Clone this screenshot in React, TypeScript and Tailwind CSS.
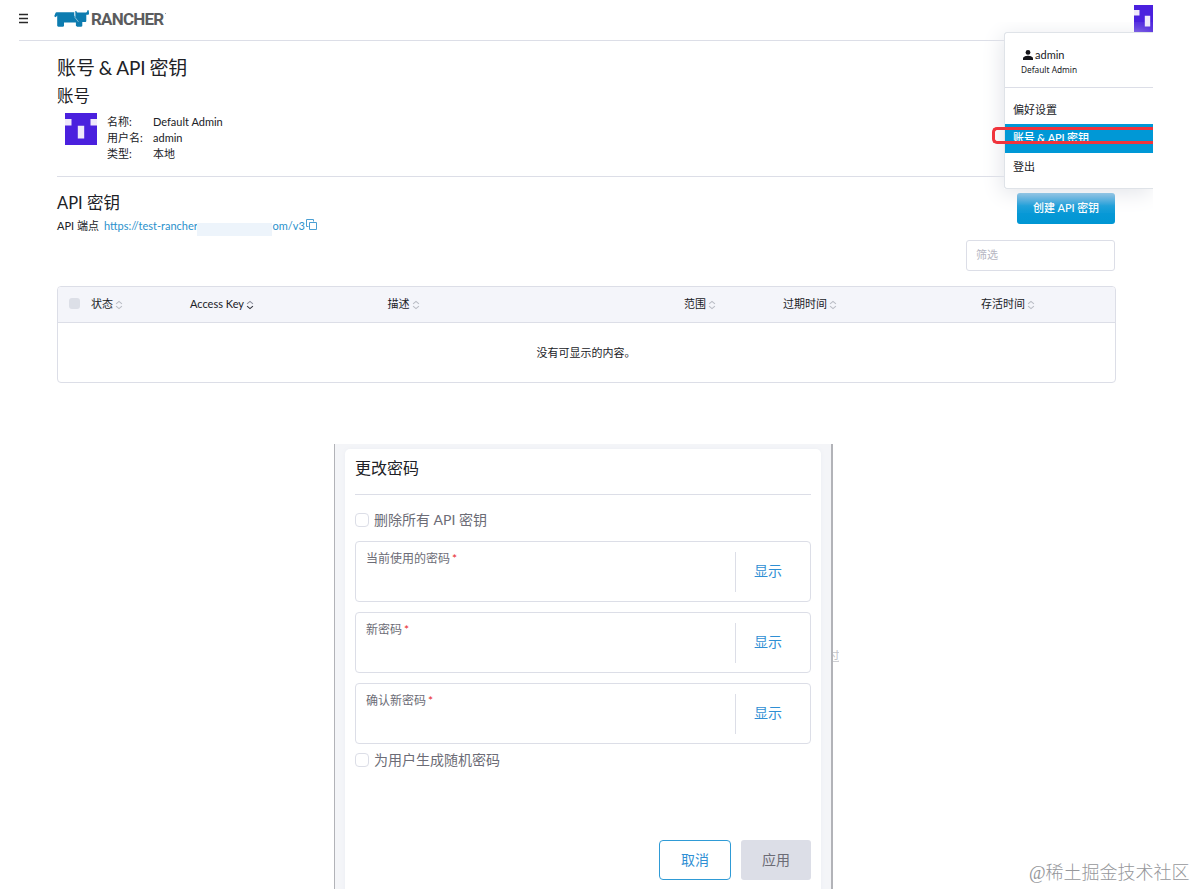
const columns = [
  { label: "状态", width: "w-[99px]", active: false },
  { label: "Access Key", width: "w-[197.5px]", active: true },
  { label: "描述", width: "w-[296.5px]", active: false },
  { label: "范围", width: "w-[99px]", active: false },
  { label: "过期时间", width: "w-[198px]", active: false },
  { label: "存活时间", width: "w-[134px]", active: false },
];

const details = [
  { label: "名称:", value: "Default Admin" },
  { label: "用户名:", value: "admin" },
  { label: "类型:", value: "本地" },
];

const fields = ["当前使用的密码", "新密码", "确认新密码"];

function Identicon({ className }: { className: string }) {
  return (
    <svg viewBox="0 0 32 32" className={className}>
      <rect width="32" height="32" fill="#4a20de" />
      <path d="M0 6h6.5v6.5H0zM25.5 6H32v6.5h-6.5zM12.8 12.8h6.4v12.8h-6.4z" fill="#efe8fb" />
    </svg>
  );
}

function Logo() {
  return (
    <svg viewBox="0 0 36 17" className="h-[17px] w-9" fill="#0d7cb0">
      <path d="M3 2.2h17.4v3.2l2 2.3h5.9v7.8c0 .8-.4 1.2-1.2 1.2h-4c-.8 0-1.2-.4-1.2-1.2v-3H10v3c0 .8-.4 1.2-1.2 1.2H4.4c-.8 0-1.2-.4-1.2-1.2V5.6L1.8 7.2.2 6.3l1.2-3C1.7 2.5 2.2 2.2 3 2.2Z" />
      <path d="M21.2 1.2 22.3 1c.3 1.2.8 1.6 1.8 1.6h7.1c1.2 0 1.8-.5 2-1.4l.2-1 1.3.1.3 3c.1 1-.5 1.5-1.4 1.5h-1.3v6c0 .8-.4 1.2-1.2 1.2h-6.3L21.2 7.2z" />
      <path d="m20.8 2.2.2 5.2 3.4 4.4" fill="none" stroke="#fff" strokeWidth=".5" />
    </svg>
  );
}

function SortIcon({ active }: { active: boolean }) {
  return (
    <svg viewBox="0 0 9 10" className="h-[10px] w-[8px]" fill="none" strokeWidth="1.2">
      <path d="M1.2 3.7 4.5.9l3.3 2.8" stroke={active ? "#8b8f9c" : "#b9bcc4"} />
      <path d="m1.2 6.3 3.3 2.8 3.3-2.8" stroke={active ? "#30333d" : "#b9bcc4"} />
    </svg>
  );
}

function UserMenu() {
  return (
    <div className="absolute left-[1004px] top-8 h-[157px] w-[149px] overflow-hidden rounded-l-[3px] border-y border-l border-[#dfe3e8] bg-white text-[11px] text-[#202126]">
      <div className="h-[55px] border-b border-[#dcdee7] pt-[15px]">
        <div className="flex h-[15px] items-center pl-[18px]">
          <svg viewBox="0 0 10 10" className="mb-[2px] h-[10px] w-[10px]" fill="#141419">
            <circle cx="5" cy="2.4" r="2.4" />
            <path d="M0 10V8.4C0 6.6 3.2 5.8 5 5.8s5 .8 5 2.6V10z" />
          </svg>
          <span className="pl-[2px]">admin</span>
        </div>
        <p className="pl-4 font-['Noto_Sans',sans-serif] text-[8.3px] leading-[14px]">Default Admin</p>
      </div>
      <div className="h-9 pl-2 pt-2 leading-[28px]">偏好设置</div>
      <div className="h-[29px] bg-[#0098d6] pl-2 font-medium leading-[28px] tracking-[-0.15px] text-white">
        账号 & API 密钥
      </div>
      <div className="pl-2 leading-[27px]">登出</div>
    </div>
  );
}

function PasswordField({ label }: { label: string }) {
  return (
    <div className="mb-[10px] flex h-[61px] items-center rounded-[4px] border border-[#dcdee7]">
      <label className="flex-1 self-start pl-[10px] pt-[8px] text-[12px] leading-[18px] text-[#6c6c76]">
        {label}
        <span className="pl-[2px] text-[#e7262b]">*</span>
      </label>
      <div className="flex h-10 w-[75px] items-center border-l border-[#dcdee7] pb-[2px] pl-[18px] text-[14px] text-[#2f8fd4]">
        显示
      </div>
    </div>
  );
}

function Checkbox({ label }: { label: string }) {
  return (
    <div className="flex h-5 items-center gap-[5px] text-[14px] text-[#6c6c76]">
      <span className="h-[14px] w-[14px] rounded-[4px] border border-[#dcdee7]" />
      <span className="pb-[2px]">{label}</span>
    </div>
  );
}

function AccountPage() {
  return (
    <div className="h-[444px]">
      <header className="ml-[19px] flex h-[41px] w-[1134px] items-start border-b border-[#dcdee7]">
        <svg viewBox="0 0 9 11" className="mt-[13px] h-[11px] w-[9px]" stroke="#292929" strokeWidth="1.7">
          <path d="M0 1.5h9M0 5.5h9M0 9.5h9" />
        </svg>
        <div className="ml-[26px] mt-[10px]">
          <Logo />
        </div>
        <span className="ml-[1px] mt-[9px] font-[Roboto,sans-serif] text-[17px] font-bold leading-5 tracking-[-0.8px] text-[#5b5c5e]">
          RANCHER
        </span>
        <span className="ml-[2px] mt-[13px] h-px w-px bg-[#9a9b9d]" />
        <div className="ml-auto mt-[5px] h-[27px] w-[19px] overflow-hidden">
          <Identicon className="h-[27px] w-[27px] max-w-none" />
        </div>
      </header>

      <main className="ml-[57px] w-[1059px]">
        <h1 className="pt-[13px] text-[19px] leading-[28px] tracking-[-0.1px] [word-spacing:-0.8px]">账号 & API 密钥</h1>
        <h2 className="text-[16.5px] leading-[28px]">账号</h2>
        <div className="flex h-[67px] border-b border-[#dcdee7] pl-2 pt-[3px]">
          <Identicon className="h-8 w-8" />
          <div className="ml-[10px] pt-px text-[11px] leading-[16px]">
            {details.map((item) => (
              <div key={item.label} className="flex">
                <span className="w-[46px]">{item.label}</span>
                <span>{item.value}</span>
              </div>
            ))}
          </div>
        </div>

        <div className="flex h-[63px] justify-between">
          <div className="pt-[14px]">
            <h2 className="text-[16.5px] leading-6">API 密钥</h2>
            <div className="flex h-[22px] items-center text-[11px]">
              <span className="mr-[5px]">API 端点</span>
              <span className="w-[93.5px] overflow-hidden whitespace-nowrap text-[#2b91cc]">https://test-rancher</span>
              <span className="mt-[6px] h-[13px] w-[75px] bg-[#edf4fb]" />
              <span className="text-[#2b91cc]">om/v3</span>
              <svg viewBox="0 0 11 11" className="mb-[3px] ml-px h-[11px] w-[11px]" fill="none" stroke="#4a9fd3">
                <path d="M2.5 7.5h-2v-7h7v2M3.5 3.5h7v7h-7z" />
              </svg>
            </div>
          </div>
          <button className="mr-px mt-4 h-[31px] w-[98px] rounded-[3px] bg-linear-to-b from-[#42a5dc] via-[#0c9ad8] via-40% to-[#0096d3] text-[11px] font-medium tracking-[-0.1px] text-white">
            创建 API 密钥
          </button>
        </div>
        <div className="ml-auto mr-px flex h-[31px] w-[149px] items-center rounded-[3px] border border-[#dcdee7] pl-[9px] text-[11px] text-[#b6b6c2]">
          筛选
        </div>

        <div className="mt-[15px] h-[97px] overflow-hidden rounded-[4px] border border-[#dcdee7]">
          <div className="flex h-9 items-center border-b border-[#dcdee7] bg-[#f4f5fa] text-[11px]">
            <span className="mb-[3px] ml-[11px] mr-[11px] h-[11px] w-[11px] rounded-[3px] bg-[#dcdfe7]" />
            {columns.map((column) => (
              <div key={column.label} className={`${column.width} flex shrink-0 items-center gap-[2px]`}>
                {column.label}
                <SortIcon active={column.active} />
              </div>
            ))}
          </div>
          <p className="pr-px text-center text-[11px] leading-[60px]">没有可显示的内容。</p>
        </div>
      </main>
    </div>
  );
}

function ChangePassword() {
  return (
    <div className="ml-[334px] h-[445px] w-[499px] overflow-hidden border-l border-r-2 border-[#b2b3b8] bg-[#f4f5f8] pl-[10px] pr-[10px] pt-[5px]">
      <div className="h-[460px] rounded-[5px] bg-white px-[10px] shadow-[0_0_4px_#eceef3]">
        <h2 className="h-[46px] border-b border-[#dcdee7] pt-[7px] text-[16px] leading-6">更改密码</h2>
        <div className="pb-[11px] pt-[15px]">
          <Checkbox label="删除所有 API 密钥" />
        </div>
        {fields.map((field) => (
          <PasswordField key={field} label={field} />
        ))}
        <div className="-mt-1">
          <Checkbox label="为用户生成随机密码" />
        </div>
        <div className="mt-[70px] flex justify-end gap-[10px] text-[14px]">
          <button className="h-10 w-[72px] rounded-[4px] border border-[#2f9bd6] pb-[2px] text-[#2f8fd4]">取消</button>
          <button className="h-10 w-[70px] rounded-[3px] bg-[#dcdee7] pb-[2px] text-[#6c6c76]">应用</button>
        </div>
      </div>
    </div>
  );
}

export default function App() {
  return (
    <div className="relative h-[889px] w-[1196px] overflow-hidden bg-white font-[Lato,'Noto_Sans_CJK_SC',sans-serif] text-[#202126]">
      <AccountPage />
      <ChangePassword />
      <div className="absolute left-[1004px] top-8 h-[157px] w-[149px] shadow-[-2px_4px_20px_#e3e5ea] [clip-path:inset(-10px_0_-24px_-24px)]" />
      <UserMenu />
      <div className="absolute left-[992px] top-[127px] h-[17px] w-[161px] rounded-l-[5px] border-y-[3px] border-l-[3px] border-[#f0343c]" />
      <div className="absolute left-[833px] top-[649px] w-[6px] overflow-hidden text-[12px] leading-4 text-[#c4c5ca]">
        <span className="-ml-[5px]">过</span>
      </div>
      <div className="absolute left-[1029px] top-[861px] whitespace-nowrap font-['Liberation_Serif','Noto_Sans_CJK_SC',serif] text-[18px] font-light leading-6 text-[#96979b]">
        @稀土掘金技术社区
      </div>
    </div>
  );
}
